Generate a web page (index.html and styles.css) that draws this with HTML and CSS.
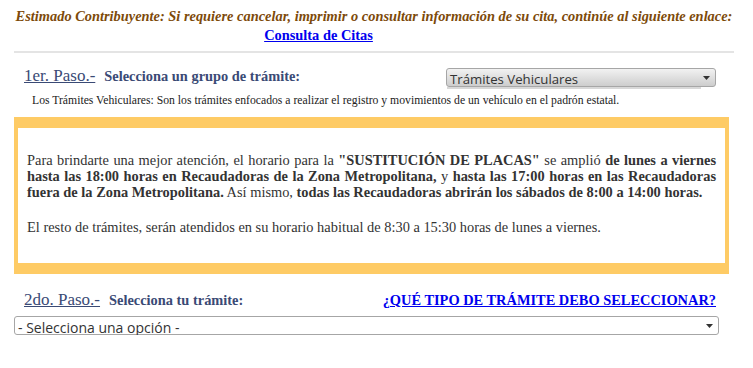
FILE: index.html
```html
<!DOCTYPE html>
<html lang="es">
<head>
  <meta charset="UTF-8" />
  <meta name="viewport" content="width=device-width, initial-scale=1.0" />
  <title>Citas - Trámites</title>
  <link rel="stylesheet" href="styles.css">
</head>
<body>
  <div class="page">
    <p class="aviso">
      Estimado Contribuyente: Si requiere cancelar, imprimir o consultar información de su cita, continúe al siguiente enlace:<br>
      <a class="cita-link" href="#">Consulta de Citas</a>
    </p>
    <hr class="sep">

    <!-- paso 1 -->
    <div class="paso">
      <span class="paso-num">1er. Paso.-</span>
      <span class="paso-label">Selecciona un grupo de trámite:</span>
      <div class="combo combo-grupo">
        <span class="combo-text">Trámites Vehiculares</span>
        <svg class="combo-arrow" width="7" height="4" viewBox="0 0 7 4"><path d="M0 0h7L3.5 4z" fill="#333"/></svg>
      </div>
    </div>
    <p class="desc">Los Trámites Vehiculares: Son los trámites enfocados a realizar el registro y movimientos de un vehículo en el padrón estatal.</p>

    <div class="horario">
      <p>Para brindarte una mejor atención, el horario para la <b>"SUSTITUCIÓN DE PLACAS"</b> se amplió <b>de lunes a viernes hasta las 18:00 horas en Recaudadoras de la Zona Metropolitana,</b> y <b>hasta las 17:00 horas en las Recaudadoras fuera de la Zona Metropolitana.</b> Así mismo, <b>todas las Recaudadoras abrirán los sábados de 8:00 a 14:00 horas.</b></p>
      <p>El resto de trámites, serán atendidos en su horario habitual de 8:30 a 15:30 horas de lunes a viernes.</p>
    </div>

    <!-- paso 2 -->
    <div class="paso paso-2">
      <span class="paso-num">2do. Paso.-</span>
      <span class="paso-label">Selecciona tu trámite:</span>
      <a class="ayuda" href="#">¿QUÉ TIPO DE TRÁMITE DEBO SELECCIONAR?</a>
    </div>
    <div class="combo combo-tramite">
      <span class="combo-text">- Selecciona una opción -</span>
      <svg class="combo-arrow" width="7" height="4" viewBox="0 0 7 4"><path d="M0 0h7L3.5 4z" fill="#333"/></svg>
    </div>
  </div>
</body>
</html>
```

FILE: styles.css
```css
body {
  margin: 0;
  font-family: 'Liberation Serif', 'Times New Roman', serif;
  background: #fff;
  color: #222;
}

.page {
  padding: 0 19px 0 14px;
}

.aviso {
  margin: 7px 0 0;
  font-size: 14.4px;
  line-height: 19px;
  font-weight: bold;
  font-style: italic;
  color: #7d4a0a;
  text-align: center;
}

.cita-link {
  font-style: normal;
  color: #0000ee;
  margin-right: 111px;
}

.sep {
  margin: 6px 0 0;
  border: none;
  height: 2px;
  background: #e4e4e4;
}

.paso {
  display: flex;
  align-items: flex-start;
  margin: 13px 18px 0 10px;
  line-height: 20px;
}

.paso-num {
  font-size: 17px;
  color: #3a4a75;
  text-decoration: underline;
}

.paso-label {
  margin-left: 9px;
  font-size: 14.4px;
  font-weight: bold;
  color: #3a4a75;
}

.combo {
  position: relative;
  height: 19px;
  box-sizing: border-box;
  border: 1px solid #a6a6a6;
  border-radius: 3px;
  padding: 2px 0 0 3px;
  font-family: 'Open Sans', 'Noto Sans', sans-serif;
  font-size: 14px;
  line-height: 17px;
  color: #333;
}

.combo-text {
  display: block;
  white-space: nowrap;
}

.combo-arrow {
  position: absolute;
  right: 5px;
  top: 7px;
}

.combo::after {
  content: "";
  position: absolute;
  left: 0;
  right: 14px;
  top: 18px;
  height: 2px;
  background: #d8d8d8;
}

.combo-grupo {
  margin-left: auto;
  margin-top: 2px;
  width: 270px;
  font-size: 13.2px;
  background: linear-gradient(to bottom, #f2f2f2, #cdcdcd);
}

.desc {
  margin: 7px 0 0 18px;
  font-size: 11.7px;
  line-height: 14px;
}

.horario {
  margin: 9px 5px 0 0;
  border: solid #fecb65;
  border-width: 11px 4px;
  padding: 10px 9px 14px;
  font-size: 14.4px;
  line-height: 16px;
  color: #333;
  text-align: justify;
}

.horario p {
  margin: 14px 0;
}

.horario p + p {
  margin-top: 19px;
}

.paso-2 {
  margin-top: 16px;
  align-items: baseline;
}

.ayuda {
  margin-left: auto;
  font-size: 14.4px;
  font-weight: bold;
  color: #0000ee;
}

.combo-tramite {
  margin: 6px 15px 0 0;
  background: #fff;
}

.combo-tramite::after {
  background: #e2e2e2;
}
```
